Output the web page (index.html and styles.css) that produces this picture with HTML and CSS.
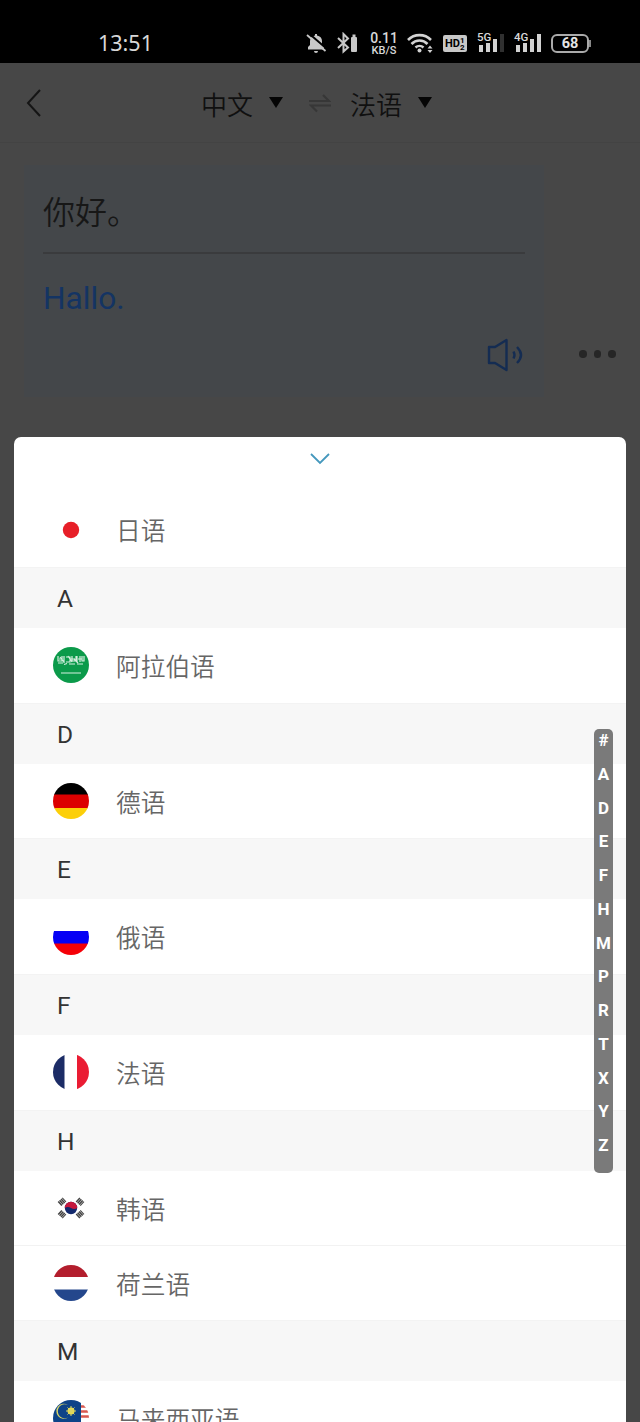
FILE: index.html
```html
<!DOCTYPE html>
<html lang="zh-CN">
<head>
    <meta charset="UTF-8">
    <meta name="viewport" content="width=device-width, initial-scale=1.0">
    <title>翻译</title>
    <link rel="stylesheet" href="styles.css">
</head>

<body>
    <div class="status-bar">
        <span class="time">13:51</span>
        <div class="status-icons">
            <svg width="21" height="22" viewBox="0 0 21 22">
                <path d="M2 17.500V15l2-2V9c0-3 2-5 5-5.500V2h2v1.500c3 .5 5 2.500 5 5.500v4l2 2v2.500z M8 19h4a2 2 0 0 1-4 0z" fill="#c8c8c8"/>
                <path d="M3 1.500l18 15.500" stroke="#000" stroke-width="2"/>
                <path d="M1 3l18.500 16" stroke="#c8c8c8" stroke-width="1.800"/>
            </svg>
            <svg width="24" height="22" viewBox="0 0 24 22">
                <path d="M1 6l10 9.500-4.500 4V2l4.500 4.500L1 16" fill="none" stroke="#c8c8c8" stroke-width="2"/>
                <rect x="14" y="5" width="6" height="15" rx="1" fill="#c8c8c8"/>
                <rect x="15.500" y="2.500" width="3" height="2.500" fill="#c8c8c8"/>
            </svg>
            <div class="speed"><b>0.11</b><span>KB/S</span></div>
            <svg width="26" height="22" viewBox="0 0 26 22">
                <g fill="none" stroke="#d2d2d2" stroke-width="2.600">
                    <path d="M1 8a16 16 0 0 1 23 0"/>
                    <path d="M4.500 12a11 11 0 0 1 16 0"/>
                    <path d="M8.500 15.500a6 6 0 0 1 8 0"/>
                </g>
                <circle cx="12.500" cy="18.500" r="2" fill="#d2d2d2"/>
                <path d="M20.500 16.500l2.500-3 2.500 3zM20.500 18l2.500 3 2.500-3z" fill="#d2d2d2"/>
            </svg>
            <div class="hd">HD<small><i>1</i><i>2</i></small></div>
            <div class="signal">
                <span>5G</span>
                <svg width="27" height="22" viewBox="0 0 27 22">
                    <path d="M2 13h4v7H2zM9 11h4v9H9zM16 7h4v13h-4z" fill="#d2d2d2"/>
                    <path d="M23 2h4v18h-4z" fill="#303030"/>
                </svg>
            </div>
            <div class="signal">
                <span>4G</span>
                <svg width="27" height="22" viewBox="0 0 27 22">
                    <path d="M2 13h4v7H2zM9 11h4v9H9zM16 7h4v13h-4zM23 2h4v18h-4z" fill="#d2d2d2"/>
                </svg>
            </div>
            <div class="battery">68</div>
        </div>
    </div>

    <header class="nav">
        <svg class="back" width="18" height="30" viewBox="0 0 18 30">
            <path d="M15 2L3 15l12 13" fill="none" stroke="#151515" stroke-width="2"/>
        </svg>
        <span class="lang">中文</span>
        <span class="arrow"></span>
        <svg class="swap" width="22" height="20" viewBox="0 0 22 20">
            <path d="M0 8h20l-6-6M22 12.500H2l6 6" fill="none" stroke="#373737" stroke-width="2.200"/>
        </svg>
        <span class="lang">法语</span>
        <span class="arrow"></span>
    </header>

    <main>
        <div class="card">
            <p class="source">你好。</p>
            <p class="result">Hallo.</p>
            <svg class="speaker" width="38" height="34" viewBox="0 0 38 34">
                <g fill="none" stroke="#142c52" stroke-width="2.400">
                    <path d="M2 9h6l11.500-7v30L8 25H2z" stroke-linejoin="round"/>
                    <path d="M26.500 13.500q2 3.500 0 7"/>
                    <path d="M30 9q8 8 0 16"/>
                </g>
            </svg>
        </div>
        <div class="more"><i></i><i></i><i></i></div>
    </main>

    <div class="sheet">
        <div class="sheet-top">
            <svg width="20" height="12" viewBox="0 0 20 12">
                <path d="M1 1l9 9 9-9" fill="none" stroke="#4598bd" stroke-width="1.800"/>
            </svg>
        </div>

        <div class="item">
            <svg class="flag" viewBox="0 0 36 36"><circle cx="18" cy="18" r="8.200" fill="#e71f28"/></svg>
            <span>日语</span>
        </div>

        <div class="letter">A</div>
        <div class="item">
            <svg class="flag" viewBox="0 0 36 36">
                <rect width="36" height="36" fill="#0b9a4a"/>
                <g fill="none" stroke="#d5efdf" stroke-width="1.200">
                    <path d="M5 9v5h4V9M7 10l4 5M11 9v7M13 10h4v5h-4M15 9l4 6M19 9v5h4V9M21 12l4 4M24 9v6M27 9v6M29 9v5h2V9"/>
                    <path d="M5 16h5M11 17.500l3-1M16 17h6M24 17h6M6 12h3M17 12h5M25 12h4"/>
                    <path d="M8 26h20"/>
                </g>
            </svg>
            <span>阿拉伯语</span>
        </div>

        <div class="letter">D</div>
        <div class="item">
            <svg class="flag" viewBox="0 0 36 36">
                <rect width="36" height="12" fill="#000"/>
                <rect y="11.500" width="36" height="14" fill="#dc0000"/>
                <rect y="25" width="36" height="11" fill="#fccf09"/>
            </svg>
            <span>德语</span>
        </div>

        <div class="letter">E</div>
        <div class="item">
            <svg class="flag" viewBox="0 0 36 36">
                <rect y="12" width="36" height="13" fill="#0500f5"/>
                <rect y="24.500" width="36" height="12" fill="#f50008"/>
            </svg>
            <span>俄语</span>
        </div>

        <div class="letter">F</div>
        <div class="item">
            <svg class="flag" viewBox="0 0 36 36">
                <rect width="11.500" height="36" fill="#1c2c66"/>
                <rect x="24" width="12" height="36" fill="#ea1c33"/>
            </svg>
            <span>法语</span>
        </div>

        <div class="letter">H</div>
        <div class="item">
            <svg class="flag" viewBox="0 0 36 36">
                <circle cx="18" cy="18" r="6.200" fill="#13296d"/>
                <path d="M11.800 18a6.200 6.200 0 0 1 12.400 0q-3 2-6.200 0t-6.200 0z" fill="#c5183d"/>
                <g stroke="#444" stroke-width="5.500" stroke-dasharray="1.500 .4">
                    <path d="M6.500 14l5-4.500M24.500 9.500l5 4.500M6.500 22l5 4.500M24.500 26.500l5-4.500"/>
                </g>
            </svg>
            <span>韩语</span>
        </div>
        <div class="item line">
            <svg class="flag" viewBox="0 0 36 36">
                <rect width="36" height="12" fill="#b31e2d"/>
                <rect y="24.500" width="36" height="12" fill="#24478c"/>
            </svg>
            <span>荷兰语</span>
        </div>

        <div class="letter">M</div>
        <div class="item">
            <svg class="flag" viewBox="0 0 36 36">
                <path d="M27 6.500h9M27 11.500h9M27 16.500h9M0 25h36M0 30h36" stroke="#d8584f" stroke-width="2.500"/>
                <rect width="28" height="22" fill="#0d4388"/>
                <path d="M15 5a7 7 0 1 0 0 12.500a7.500 7.500 0 1 1 0-12.500z" fill="#d8d569"/>
                <circle cx="18" cy="11" r="3.500" fill="#eadb45"/>
                <path d="M18 6v10M13 11h10M14.500 7.500l7 7M21.500 7.500l-7 7" stroke="#d8d569"/>
            </svg>
            <span>马来西亚语</span>
        </div>

        <div class="index">
            <span>#</span><span>A</span><span>D</span><span>E</span><span>F</span><span>H</span><span>M</span><span>P</span><span>R</span><span>T</span><span>X</span><span>Y</span><span>Z</span>
        </div>
    </div>
</body>
</html>
```

FILE: styles.css
```css
* {
    box-sizing: border-box;
}

body {
    font-family: Roboto, "Noto Sans CJK SC", sans-serif;
    margin: 0;
    height: 1422px;
    overflow: hidden;
    background-color: #474747;
    display: flex;
    flex-direction: column;
}

/* status bar */
.status-bar {
    height: 63px;
    flex: none;
    background-color: #000;
    color: #d8d8d8;
    display: flex;
    justify-content: space-between;
    padding: 32px 49px 0 98px;
}

.time {
    font-family: "Noto Sans", sans-serif;
    font-size: 21.5px;
    line-height: 22px;
}

.status-icons {
    display: flex;
    gap: 10px;
    height: 22px;
}

.speed {
    width: 26px;
    display: flex;
    flex-direction: column;
    align-items: center;
    font-size: 11px;
    line-height: 11px;
}

.speed b {
    font-size: 14px;
    font-weight: 500;
    line-height: 14px;
    margin-top: -1px;
}

.speed span {
    font-weight: 500;
}

.hd {
    width: 24px;
    height: 17px;
    margin-top: 3px;
    padding-left: 2px;
    border-radius: 2px;
    background-color: #c8c8c8;
    color: #000;
    display: flex;
    align-items: center;
    font-size: 11px;
    font-weight: 700;
}

.hd small {
    display: flex;
    flex-direction: column;
    font-size: 8px;
    line-height: 7px;
}

.hd i {
    font-style: normal;
}

.signal {
    position: relative;
    width: 27px;
}

.signal span {
    position: absolute;
    left: 0;
    top: 0;
    font-size: 11.5px;
    font-weight: 500;
    line-height: 10px;
    background-color: #000;
}

.battery {
    position: relative;
    width: 38px;
    height: 19px;
    margin: 2px 2px 0 0;
    border: 2px solid #aaa;
    border-radius: 6px;
    color: #e4e4e4;
    font-size: 14.5px;
    font-weight: 700;
    line-height: 15px;
    text-align: center;
}

.battery::after {
    content: "";
    position: absolute;
    right: -4px;
    top: 4px;
    width: 2px;
    height: 7px;
    background-color: #888;
}

/* top navigation */
.nav {
    height: 80px;
    flex: none;
    display: flex;
    align-items: center;
    padding-left: 25px;
    border-bottom: 1px solid #434343;
    color: #101010;
}

.back {
    margin-right: 158px;
}

.lang {
    width: 52px;
    padding-top: 7px;
    font-size: 26px;
    font-weight: 350;
    line-height: 38px;
    white-space: nowrap;
}

.arrow {
    margin: 0 0 1px 16px;
    border: 7px solid transparent;
    border-top: 11px solid #050505;
    border-bottom: 0;
}

.swap {
    margin: 0 19px 0 26px;
}

/* translation card */
main {
    display: flex;
    height: 294px;
    flex: none;
    padding: 22px 0 0 24px;
}

.card {
    width: 520px;
    height: 232px;
    padding: 22px 19px 0;
    background-color: #44474a;
    display: flex;
    flex-direction: column;
}

.card p {
    margin: 0;
    font-size: 32px;
}

.source {
    height: 67px;
    padding-top: 2px;
    font-weight: 350;
    line-height: 48px;
    color: #171717;
    border-bottom: 2px solid #3a3b3d;
}

.card .result {
    height: 84px;
    padding-top: 23px;
    font-size: 31.7px;
    line-height: 44px;
    color: #143463;
}

.speaker {
    align-self: flex-end;
}

.more {
    display: flex;
    gap: 7px;
    margin: 185px 0 0 35px;
}

.more i {
    width: 7.5px;
    height: 7.5px;
    border-radius: 50%;
    background-color: #262626;
}

/* language list */
.sheet {
    position: relative;
    flex: 1;
    min-height: 0;
    margin: 0 14px;
    overflow: hidden;
    background-color: #fff;
    border-radius: 7px 7px 0 0;
}

.sheet-top {
    height: 55.3px;
    padding-top: 16px;
    text-align: center;
    line-height: 0;
}

.item {
    height: 74.7px;
    padding-left: 39px;
    display: flex;
    align-items: center;
    gap: 27px;
    color: #666;
    font-size: 24.7px;
    line-height: 36px;
}

.item span {
    font-weight: 350;
    padding-top: 5px;
}

.line {
    border-top: 1px solid #f2f2f2;
}

.flag {
    width: 36px;
    height: 36px;
    border-radius: 50%;
}

.letter {
    height: 61px;
    padding-left: 43px;
    background-color: #f7f7f7;
    border-top: 1px solid #f3f3f3;
    color: #333;
    font-size: 24.5px;
    line-height: 61px;
}

.index {
    position: absolute;
    top: 292px;
    right: 13px;
    width: 19px;
    height: 444px;
    border-radius: 5px;
    background-color: #7a7a7a;
    color: #fff;
    display: flex;
    flex-direction: column;
    align-items: center;
    gap: 11.75px;
    font-size: 17px;
    font-weight: 700;
    line-height: 22px;
}
```
